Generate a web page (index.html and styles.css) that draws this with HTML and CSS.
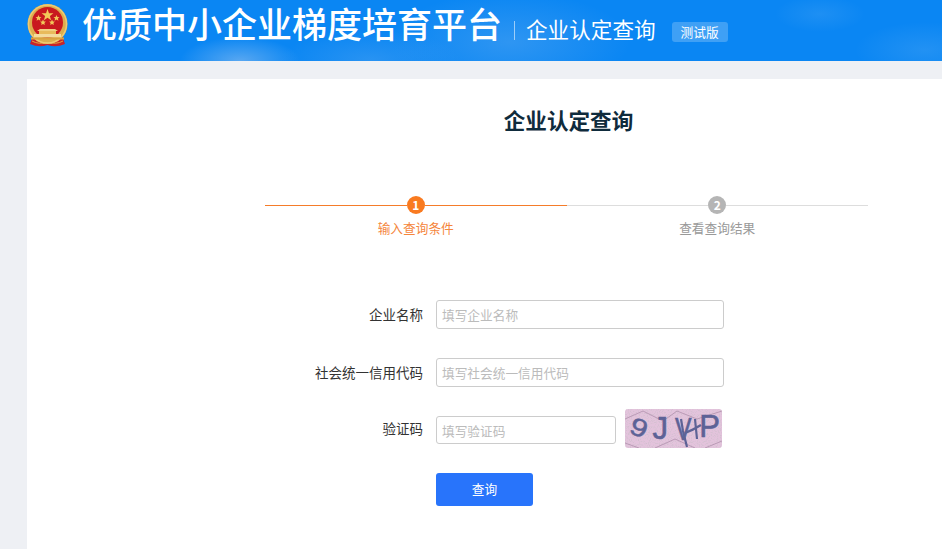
FILE: index.html
```html
<!DOCTYPE html>
<html>
	<head>
	<meta charset="utf-8">
	<meta name="viewport" content="width=device-width, initial-scale=1.0"/>
	<title>企业认定查询</title>
	<link rel="stylesheet" href="styles.css">
	</head>
	<body>
		<div class="header">
			<svg class="emblem" viewBox="0 0 41 44" width="41" height="44">
				<path d="M6 31 L3 40 Q12 44 20.5 41 Q29 44 38 40 L35 31 Z" fill="#c8232c"/>
				<path d="M5 37 Q12 41 20.5 38 Q29 41 36 37" fill="none" stroke="#e0a93c" stroke-width="1"/>
				<circle cx="20.5" cy="20" r="20" fill="#dcae4e"/>
				<circle cx="20.5" cy="20" r="19" fill="none" stroke="#eecb74" stroke-width="1.4"/>
				<circle cx="20.5" cy="18.5" r="15.5" fill="#c9191f"/>
				<polygon points="20.5,5 22,9.2 26.4,9.3 22.9,12 24.1,16.2 20.5,13.7 16.9,16.2 18.1,12 14.6,9.3 19,9.2" fill="#f3c95a"/>
				<polygon points="11.5,11 12.4,13 14.5,13.2 12.9,14.6 13.4,16.7 11.5,15.6 9.6,16.7 10.1,14.6 8.5,13.2 10.6,13" fill="#f3c95a"/>
				<polygon points="29.5,11 30.4,13 32.5,13.2 30.9,14.6 31.4,16.7 29.5,15.6 27.6,16.7 28.1,14.6 26.5,13.2 28.6,13" fill="#f3c95a"/>
				<polygon points="16,15.5 16.9,17.4 18.9,17.6 17.4,19 17.8,21 16,20 14.2,21 14.6,19 13.1,17.6 15.1,17.4" fill="#f3c95a"/>
				<polygon points="25,15.5 25.9,17.4 27.9,17.6 26.4,19 26.8,21 25,20 23.2,21 23.6,19 22.1,17.6 24.1,17.4" fill="#f3c95a"/>
				<path d="M13 25 L28 25 L31 27 L10 27 Z" fill="#f0cf80"/>
				<rect x="12" y="27" width="17" height="3" fill="#e8bb5c"/>
				<rect x="7" y="30" width="27" height="3.5" fill="#f3dc9e"/>
				<rect x="4" y="33.5" width="33" height="2" fill="#d9a441"/>
			</svg>
			<div class="site-name">优质中小企业梯度培育平台</div>
			<div class="header-sep"></div>
			<div class="page-name">企业认定查询</div>
			<div class="badge">测试版</div>
		</div>

		<div class="page">
			<div class="card">
				<h1 class="title">企业认定查询</h1>

				<div class="steps">
					<div class="step active">
						<div class="step-track">
							<span class="step-line"></span>
							<span class="step-num">1</span>
							<span class="step-line"></span>
						</div>
						<div class="step-label">输入查询条件</div>
					</div>
					<div class="step">
						<div class="step-track">
							<span class="step-line"></span>
							<span class="step-num">2</span>
							<span class="step-line"></span>
						</div>
						<div class="step-label">查看查询结果</div>
					</div>
				</div>

				<form class="form">
					<div class="row">
						<label class="row-label">企业名称</label>
						<input class="field" type="text" placeholder="填写企业名称">
					</div>
					<div class="row">
						<label class="row-label">社会统一信用代码</label>
						<input class="field" type="text" placeholder="填写社会统一信用代码">
					</div>
					<div class="row row-code">
						<label class="row-label">验证码</label>
						<input class="field field-code" type="text" placeholder="填写验证码">
						<div class="captcha">
							<svg class="captcha-noise" viewBox="0 0 97 39" width="97" height="39">
								<filter id="speckle">
									<feTurbulence type="fractalNoise" baseFrequency="0.9" numOctaves="2"/>
									<feColorMatrix values="0 0 0 0 0.55  0 0 0 0 0.5  0 0 0 0 0.55  0 0 0 1.6 -0.75"/>
								</filter>
								<rect width="97" height="39" filter="url(#speckle)"/>
								<path d="M0 10 L18 2 L38 12 L52 2 L72 10 L97 2 M0 34 L14 39 M30 39 L50 30 L70 39 M80 39 L97 32" fill="none" stroke="#a98aa6" stroke-width="0.7"/>
								<path d="M56 10 L58 22 L62 38 M60 24 Q68 21 76 16 M70 10 L72 30" fill="none" stroke="#5d6296" stroke-width="2.2"/>
							</svg>
							<span class="captcha-char c1">9</span>
							<span class="captcha-char c2">J</span>
							<span class="captcha-char c3">V</span>
							<span class="captcha-char c4">P</span>
						</div>
					</div>
					<div class="row-btn">
						<button class="btn" type="button">查询</button>
					</div>
				</form>
			</div>
		</div>
	</body>
</html>
```

FILE: styles.css
```css
html, body {
	margin: 0;
	padding: 0;
	height: 100%;
	overflow: hidden;
}

body {
	background-color: #eef0f4;
	font-family: "Noto Sans CJK SC", "Liberation Sans", sans-serif;
}

.header {
	display: flex;
	align-items: center;
	height: 61px;
	padding-left: 27px;
	box-sizing: border-box;
	color: #fff;
	background-color: #0a86f3;
	background-image:
		radial-gradient(ellipse 60px 24px at 240px 61px, rgba(130,185,240,0.65), rgba(130,185,240,0)),
		radial-gradient(ellipse 90px 30px at 370px 60px, rgba(130,185,240,0.25), rgba(130,185,240,0)),
		radial-gradient(ellipse 120px 50px at 510px 42px, rgba(130,185,240,0.3), rgba(130,185,240,0)),
		radial-gradient(ellipse 45px 18px at 820px 14px, rgba(170,210,245,0.12), rgba(170,210,245,0)),
		radial-gradient(ellipse 70px 28px at 925px 50px, rgba(170,210,245,0.15), rgba(170,210,245,0));
}

.emblem {
	flex: none;
	margin-top: -10px;
}

.site-name {
	margin-left: 14px;
	font-size: 35px;
	font-weight: 500;
	line-height: 44px;
	white-space: nowrap;
	margin-bottom: 16px;
}

.header-sep {
	width: 1px;
	height: 19px;
	margin-left: 12px;
	background-color: rgba(255,255,255,0.55);
	margin-top: -1px;
}

.page-name {
	margin-left: 11px;
	font-size: 21.6px;
	line-height: 30px;
	white-space: nowrap;
	margin-bottom: 3px;
}

.badge {
	margin: 2px 0 0 16px;
	width: 56px;
	height: 20px;
	line-height: 20px;
	text-align: center;
	font-size: 12.7px;
	border-radius: 3px;
	background-color: rgba(255,255,255,0.22);
}

.page {
	padding: 18px 0 0 27px;
}

.card {
	background-color: #fff;
	height: 470px;
	padding-top: 26px;
	box-sizing: border-box;
}

.title {
	margin: 0 0 0 241px;
	width: 601px;
	text-align: center;
	font-size: 21.6px;
	font-weight: 700;
	line-height: 30px;
	color: #0f2b3c;
}

.steps {
	display: flex;
	width: 603px;
	margin: 61px 0 0 238px;
}

.step {
	flex: 1;
}

.step-track {
	display: flex;
	align-items: center;
	height: 18px;
}

.step-line {
	flex: 1;
	height: 1px;
	background-color: #ddd;
}

.step-num {
	flex: none;
	width: 18px;
	height: 18px;
	line-height: 18px;
	text-align: center;
	border-radius: 50%;
	font-size: 12px;
	font-weight: 700;
	color: #fff;
	background-color: #b5b5b5;
}

.step-label {
	margin-top: 5px;
	text-align: center;
	font-size: 12.7px;
	line-height: 18px;
	color: #999;
}

.step.active .step-line {
	background-color: #f57c2a;
}

.step.active .step-num {
	background-color: #f97a20;
}

.step.active .step-label {
	color: #f5863c;
}

.form {
	margin-top: 63px;
}

.row {
	display: flex;
	align-items: center;
	margin-bottom: 29px;
}

.row-code {
	margin-bottom: 25px;
	margin-top: -7px;
}

.row-label {
	width: 396px;
	margin-right: 13px;
	text-align: right;
	font-size: 13.5px;
	color: #333;
	margin-bottom: 2px;
}

.field {
	width: 288px;
	height: 29px;
	padding: 0 5px;
	box-sizing: border-box;
	border: 1px solid #ccc;
	border-radius: 3px;
	font-family: inherit;
	font-size: 12.7px;
	outline: none;
}

.field::placeholder {
	color: #bbb;
}

.field-code {
	align-self: flex-start;
	width: 180px;
	height: 28px;
	margin-top: 7px;
}

.captcha {
	position: relative;
	display: flex;
	justify-content: space-between;
	box-sizing: border-box;
	width: 97px;
	height: 39px;
	padding: 0 2px 0 5px;
	margin-left: 9px;
	border-radius: 3px;
	overflow: hidden;
	background-color: #e3c3dc;
}

.captcha-noise {
	position: absolute;
	top: 0;
	left: 0;
}

.captcha-char {
	position: relative;
	font-family: "Liberation Sans", sans-serif;
	font-size: 31px;
	line-height: 37px;
	color: #5d6296;
	-webkit-text-stroke: 0.6px #5d6296;
}

.c1 {
	transform: rotate(20deg) scaleY(0.8);
}

.c2 {
	transform: translateY(1px);
}

.c3 {
	transform: scaleX(0.8) translateY(2px);
}

.c4 {
	transform: translateY(-1px);
}

.row-btn {
	padding-left: 409px;
}

.btn {
	display: block;
	width: 97px;
	height: 33px;
	padding: 0 0 2px;
	border: none;
	border-radius: 3px;
	background-color: #2874fb;
	color: #fff;
	font-family: inherit;
	font-size: 12.7px;
}
```
